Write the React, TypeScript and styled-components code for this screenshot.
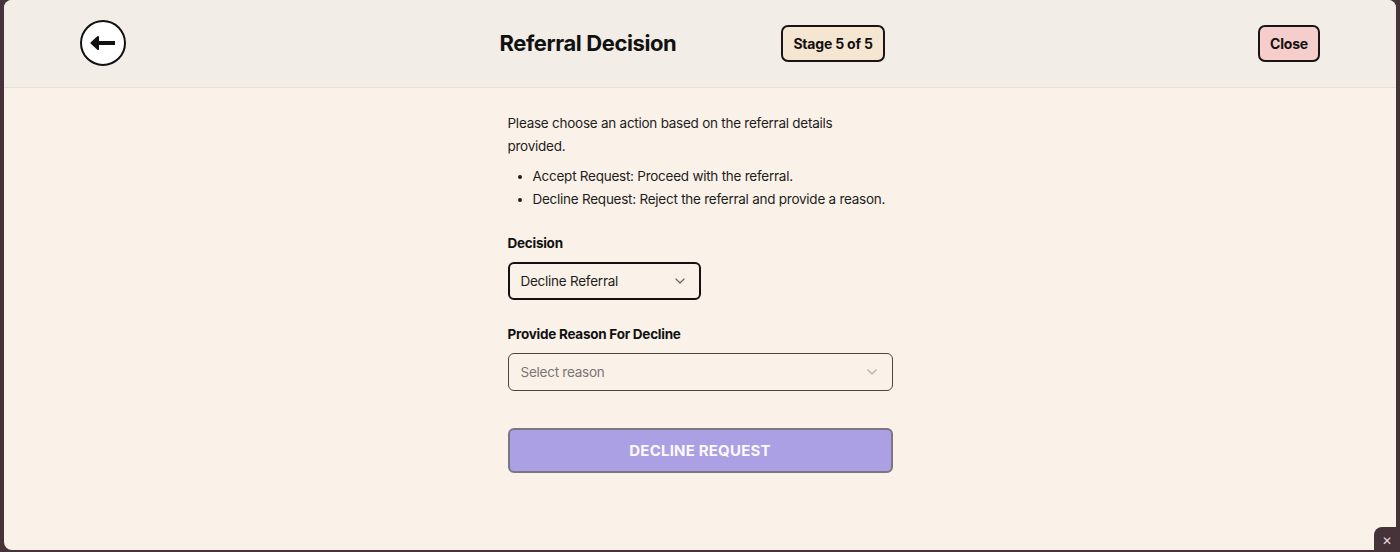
import React from "react";
import styled, { createGlobalStyle } from "styled-components";

const GlobalStyle = createGlobalStyle`
  html, body {
    margin: 0;
    padding: 0;
    background: #46333a;
  }
  body {
    font-family: Inter, "Noto Sans", "Liberation Sans", sans-serif;
    color: #1c1b1a;
    -webkit-font-smoothing: antialiased;
  }
`;

const Screen = styled.div`
  position: relative;
  height: 552px;
  padding: 0 4px 2px;
  box-sizing: border-box;
`;

const Panel = styled.div`
  height: 550px;
  background: #faf2e9;
  border-radius: 8px;
  overflow: hidden;
  display: flex;
  flex-direction: column;
`;

const Header = styled.header`
  height: 88px;
  flex-shrink: 0;
  box-sizing: border-box;
  padding: 0 76px;
  display: flex;
  align-items: center;
  justify-content: space-between;
  background: #f2ede6;
  border-bottom: 1px solid #e8e0d6;
`;

const BackButton = styled.button`
  width: 46px;
  height: 46px;
  padding: 0;
  border-radius: 50%;
  border: 2px solid #111;
  background: #fff;
  display: flex;
  align-items: center;
  justify-content: center;
  cursor: pointer;
  margin-top: -2px;
`;

const Middle = styled.div`
  display: flex;
  align-items: center;
  gap: 105px;
`;

const Title = styled.h1`
  margin: -2px 0 0;
  font-size: 22px;
  font-weight: 700;
  letter-spacing: -0.4px;
  color: #111;
`;

const Pill = styled.div<{ $bg: string }>`
  height: 37px;
  box-sizing: border-box;
  padding: 0 10px;
  display: flex;
  align-items: center;
  border: 2px solid #1a1414;
  border-radius: 7px;
  background: ${(p) => p.$bg};
  font-size: 14px;
  font-weight: 700;
  letter-spacing: -0.2px;
  color: #141010;
  cursor: pointer;
`;

const Body = styled.main`
  flex: 1;
  display: flex;
  justify-content: center;
  padding-top: 24px;
`;

const Column = styled.div`
  width: 385px;
  display: flex;
  flex-direction: column;
  letter-spacing: -0.25px;
`;

const Intro = styled.p`
  margin: 0;
  font-size: 13.5px;
  line-height: 23px;
  color: #1e1d1c;
`;

const List = styled.ul`
  margin: 7px 0 0;
  padding-left: 25px;
  font-size: 13.5px;
  line-height: 23px;
  color: #1e1d1c;
`;

const Label = styled.div`
  font-size: 13.5px;
  font-weight: 700;
  color: #111;
  line-height: 18px;
  margin-bottom: 10px;
`;

const Field = styled.div<{ $top: number }>`
  margin-top: ${(p) => p.$top}px;
`;

const Select = styled.div<{ $width: string; $strong?: boolean }>`
  width: ${(p) => p.$width};
  height: 38px;
  box-sizing: border-box;
  padding: 0 ${(p) => (p.$strong ? 14 : 15)}px 0 ${(p) => (p.$strong ? 11 : 12)}px;
  display: flex;
  align-items: center;
  justify-content: space-between;
  border: ${(p) => (p.$strong ? "2px solid #141010" : "1px solid #4a4542")};
  border-radius: 6px;
  background: #faf2e9;
  font-size: 13.5px;
  color: ${(p) => (p.$strong ? "#1e1d1c" : "#7a7572")};
  cursor: pointer;
`;

const SubmitButton = styled.button`
  margin-top: 37px;
  width: 385px;
  height: 45px;
  border: 2px solid #7b7680;
  border-radius: 6px;
  background: #aba0e3;
  color: #fbf9ff;
  font-family: inherit;
  font-size: 15px;
  font-weight: 700;
  letter-spacing: 0.2px;
  cursor: not-allowed;
`;

const CornerTab = styled.div`
  position: absolute;
  right: 0;
  bottom: 0;
  width: 26px;
  height: 25px;
  background: #46333a;
  border-top-left-radius: 8px;
  display: flex;
  align-items: center;
  justify-content: center;
  color: #e7dcdf;
  font-size: 12px;
  padding-top: 2px;
  box-sizing: border-box;
`;

const Chevron = ({ color }: { color: string }) => (
  <svg width="10" height="6" viewBox="0 0 10 6" fill="none">
    <path d="M1 1l4 4 4-4" stroke={color} strokeWidth="1.2" strokeLinecap="round" strokeLinejoin="round" />
  </svg>
);

const ArrowLeft = () => (
  <svg width="26" height="16" viewBox="0 0 26 16" fill="none">
    <path d="M8 2L1.5 8L8 14Z" fill="#111" stroke="#111" strokeWidth="2" strokeLinejoin="round" />
    <path d="M6 8H25" stroke="#111" strokeWidth="4" />
  </svg>
);

const App = () => {
  return (
    <>
      <GlobalStyle />
      <Screen>
        <Panel>
          <Header>
            <BackButton aria-label="Back">
              <ArrowLeft />
            </BackButton>
            <Middle>
              <Title>Referral Decision</Title>
              <Pill $bg="#f5e6d2">Stage 5 of 5</Pill>
            </Middle>
            <Pill $bg="#f5cdcb">Close</Pill>
          </Header>
          <Body>
            <Column>
              <Intro>Please choose an action based on the referral details provided.</Intro>
              <List>
                <li>Accept Request: Proceed with the referral.</li>
                <li>Decline Request: Reject the referral and provide a reason.</li>
              </List>
              <Field $top={23}>
                <Label>Decision</Label>
                <Select $width="193px" $strong>
                  <span>Decline Referral</span>
                  <Chevron color="#6b6764" />
                </Select>
              </Field>
              <Field $top={25}>
                <Label>Provide Reason For Decline</Label>
                <Select $width="385px">
                  <span>Select reason</span>
                  <Chevron color="#b2aca8" />
                </Select>
              </Field>
              <SubmitButton disabled>DECLINE REQUEST</SubmitButton>
            </Column>
          </Body>
        </Panel>
        <CornerTab>✕</CornerTab>
      </Screen>
    </>
  );
};

export default App;
